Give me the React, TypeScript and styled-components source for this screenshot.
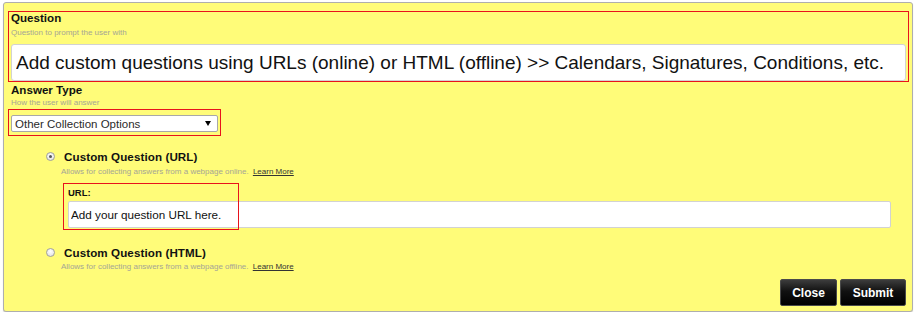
import React from 'react';
import styled, { createGlobalStyle } from 'styled-components';

const GlobalStyle = createGlobalStyle`
  html, body {
    margin: 0;
    padding: 0;
    background: #ffffff;
    font-family: "Liberation Sans", Arial, sans-serif;
  }
`;

const Panel = styled.div`
  box-sizing: border-box;
  display: flex;
  flex-direction: column;
  width: 910px;
  height: 310px;
  margin: 2px 0 0 3px;
  padding: 8px 3px 5px 4px;
  background: #fffc79;
  border: 1px solid #aeaeae;
  border-radius: 3px;
  box-shadow: 0 1px 1px rgba(0, 0, 0, 0.18);
`;

const Highlight = styled.div`
  box-sizing: border-box;
  border: 1px solid #e8121c;
`;

const QuestionBox = styled(Highlight)`
  padding: 0 2px;
`;

const FieldLabel = styled.div<{ $indent?: number; $top?: number }>`
  margin: ${({ $top }) => $top ?? 0}px 0 0 ${({ $indent }) => $indent ?? 0}px;
  font-size: 11.6px;
  line-height: 12px;
  font-weight: bold;
  color: #111111;
`;

const Hint = styled.div<{ $indent?: number; $top?: number }>`
  margin: ${({ $top }) => $top ?? 0}px 0 0 ${({ $indent }) => $indent ?? 0}px;
  font-size: 8px;
  line-height: 10px;
  color: #a5a596;

  & a {
    color: #333333;
    text-decoration: underline;
    margin-left: 2px;
  }
`;

const BigInput = styled.input`
  display: block;
  box-sizing: border-box;
  width: 100%;
  height: 37px;
  margin-top: 6px;
  padding: 0 4px;
  font-family: "Liberation Sans", Arial, sans-serif;
  font-size: 19px;
  color: #111111;
  background: #ffffff;
  border: 1px solid #d2d2d2;
  border-radius: 3px;
  outline: none;
`;

const SelectBox = styled(Highlight)`
  width: 213px;
  margin-top: 1px;
  padding: 5px 2px 3px 2px;
`;

const FakeSelect = styled.div`
  box-sizing: border-box;
  display: flex;
  align-items: center;
  justify-content: space-between;
  height: 17px;
  padding: 0 6px 0 3px;
  font-size: 11.5px;
  color: #2a2a2a;
  background: #ffffff;
  border: 1px solid #a8a8a8;
  border-radius: 2px;
`;

const Arrow = styled.span`
  width: 0;
  height: 0;
  border-left: 3px solid transparent;
  border-right: 3px solid transparent;
  border-top: 5px solid #000000;
`;

const RadioRow = styled.label<{ $top: number }>`
  display: flex;
  align-items: center;
  height: 12px;
  margin-top: ${({ $top }) => $top}px;
  padding-left: 38px;
  font-size: 11.6px;
  font-weight: bold;
  color: #111111;
  letter-spacing: 0.1px;
`;

const Radio = styled.span<{ $checked?: boolean }>`
  position: relative;
  box-sizing: border-box;
  width: 9px;
  height: 9px;
  margin-right: 9px;
  border-radius: 50%;
  border: 1px solid #a0a0a0;
  background: radial-gradient(circle at 50% 35%, #ffffff 0%, #dcdcdc 100%);

  &::after {
    content: '';
    display: ${({ $checked }) => ($checked ? 'block' : 'none')};
    position: absolute;
    left: 2px;
    top: 2px;
    width: 3px;
    height: 3px;
    border-radius: 50%;
    background: #555555;
  }
`;

const UrlField = styled.div`
  position: relative;
  margin: 6px 18px 0 55px;
  padding: 4px 0 2px 5px;
`;

const UrlLabel = styled.div`
  font-size: 9.5px;
  line-height: 11px;
  font-weight: bold;
  color: #111111;
`;

const UrlInput = styled.input`
  display: block;
  box-sizing: border-box;
  width: 100%;
  height: 27px;
  margin-top: 3px;
  padding: 0 2px;
  font-family: "Liberation Sans", Arial, sans-serif;
  font-size: 11.7px;
  color: #111111;
  background: #ffffff;
  border: 1px solid #d2d2d2;
  border-radius: 2px;
  outline: none;
`;

const UrlFrame = styled(Highlight)`
  position: absolute;
  top: 0;
  left: 0;
  width: 176px;
  height: 47px;
  pointer-events: none;
`;

const Footer = styled.div`
  display: flex;
  justify-content: flex-end;
  gap: 3px;
  margin-top: auto;
  padding-right: 3px;
`;

const Button = styled.button<{ $width: number }>`
  box-sizing: border-box;
  width: ${({ $width }) => $width}px;
  height: 27px;
  padding: 0;
  font-family: "Liberation Sans", Arial, sans-serif;
  font-size: 12px;
  font-weight: bold;
  color: #ffffff;
  background: linear-gradient(#3c3c3c 0%, #111111 45%, #000000 100%);
  border: 1px solid #4a4a4a;
  border-radius: 2px;
  cursor: pointer;
`;

export default function App() {
  return (
    <>
      <GlobalStyle />
      <Panel>
        <QuestionBox>
          <FieldLabel>Question</FieldLabel>
          <Hint $top={4}>Question to prompt the user with</Hint>
          <BigInput
            readOnly
            value="Add custom questions using URLs (online) or HTML (offline) >> Calendars, Signatures, Conditions, etc."
          />
        </QuestionBox>

        <FieldLabel $indent={3} $top={2}>Answer Type</FieldLabel>
        <Hint $indent={3} $top={2}>How the user will answer</Hint>
        <SelectBox>
          <FakeSelect>
            <span>Other Collection Options</span>
            <Arrow />
          </FakeSelect>
        </SelectBox>

        <RadioRow $top={14}>
          <Radio $checked />
          Custom Question (URL)
        </RadioRow>
        <Hint $indent={53} $top={5}>
          Allows for collecting answers from a webpage online. <a>Learn More</a>
        </Hint>
        <UrlField>
          <UrlLabel>URL:</UrlLabel>
          <UrlInput readOnly value="Add your question URL here." />
          <UrlFrame />
        </UrlField>

        <RadioRow $top={16}>
          <Radio />
          Custom Question (HTML)
        </RadioRow>
        <Hint $indent={53} $top={4}>
          Allows for collecting answers from a webpage offline. <a>Learn More</a>
        </Hint>

        <Footer>
          <Button $width={57}>Close</Button>
          <Button $width={66}>Submit</Button>
        </Footer>
      </Panel>
    </>
  );
}
